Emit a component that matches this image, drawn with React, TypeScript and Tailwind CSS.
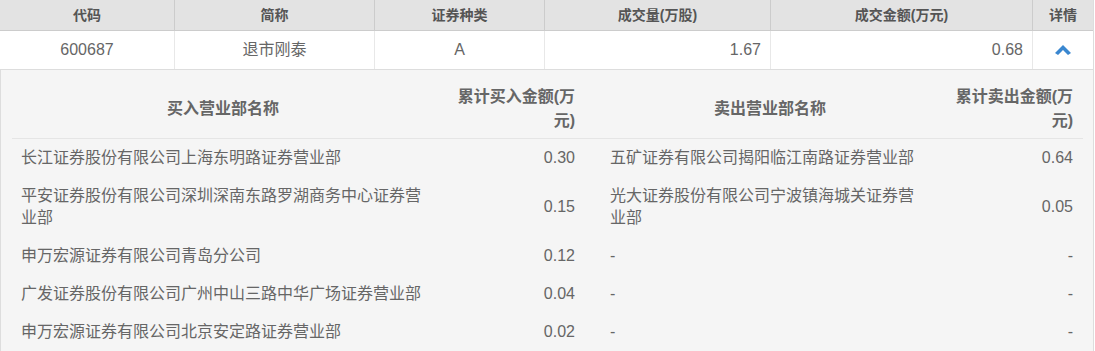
import { Fragment } from 'react'

interface Seat {
  buyName: string
  buyAmt: string
  sellName: string
  sellAmt: string
}

const seats: Seat[] = [
  { buyName: '长江证券股份有限公司上海东明路证券营业部', buyAmt: '0.30', sellName: '五矿证券有限公司揭阳临江南路证券营业部', sellAmt: '0.64' },
  { buyName: '平安证券股份有限公司深圳深南东路罗湖商务中心证券营业部', buyAmt: '0.15', sellName: '光大证券股份有限公司宁波镇海城关证券营业部', sellAmt: '0.05' },
  { buyName: '申万宏源证券有限公司青岛分公司', buyAmt: '0.12', sellName: '-', sellAmt: '-' },
  { buyName: '广发证券股份有限公司广州中山三路中华广场证券营业部', buyAmt: '0.04', sellName: '-', sellAmt: '-' },
  { buyName: '申万宏源证券有限公司北京安定路证券营业部', buyAmt: '0.02', sellName: '-', sellAmt: '-' },
]

const headers = ['代码', '简称', '证券种类', '成交量(万股)', '成交金额(万元)', '详情']

export default function App() {
  return (
    <div className="min-h-screen bg-white font-['Liberation_Sans','Noto_Sans_CJK_SC',sans-serif]">
      <div className="w-[1094px] border-r border-[#dddddd]">
        {/* Top table header */}
        <div className="grid grid-cols-[175px_200px_170px_226px_262px_60px] h-[31px] bg-[#e3e3e3] border-b border-[#cccccc] text-[14px] font-bold text-[#555555]">
          {headers.map((h, i) => (
            <div
              key={h}
              className={`flex items-center justify-center ${i < headers.length - 1 ? 'border-r border-[#cccccc]' : ''}`}
            >
              {h}
            </div>
          ))}
        </div>

        {/* Summary row */}
        <div className="grid grid-cols-[175px_200px_170px_226px_262px_60px] h-[39px] bg-white border-b border-[#dddddd] text-[16px] text-[#666666]">
          <div className="flex items-center justify-center border-r border-[#e8e8e8]">600687</div>
          <div className="flex items-center justify-center border-r border-[#e8e8e8]">退市刚泰</div>
          <div className="flex items-center justify-center border-r border-[#e8e8e8]">A</div>
          <div className="flex items-center justify-end pr-[9px] border-r border-[#e8e8e8]">1.67</div>
          <div className="flex items-center justify-end pr-[9px] border-r border-[#e8e8e8]">0.68</div>
          <div className="flex items-center justify-center">
            <svg width="16" height="10" viewBox="0 0 16 10" className="mt-[-1px]">
              <polygon points="8,0 16,8 13,10 8,5 3,10 0,8" fill="#3a87d0" />
            </svg>
          </div>
        </div>

        {/* Detail */}
        <div className="bg-[#f5f5f5] border-l border-[#dddddd] pl-[11px] pt-[10px] text-[16px] text-[#666666]">
          <div className="grid grid-cols-[422px_166px_340px_143px]">
            {/* header */}
            <div className="flex items-center justify-center py-[5px] leading-[24px] font-bold border-b border-[#e5e5e5]">
              买入营业部名称
            </div>
            <div className="flex items-center justify-end text-right pl-[10px] pr-[25px] py-[5px] leading-[24px] font-bold border-b border-[#e5e5e5]">
              累计买入金额(万元)
            </div>
            <div className="flex items-center justify-center py-[5px] leading-[24px] font-bold border-b border-[#e5e5e5]">
              卖出营业部名称
            </div>
            <div className="flex items-center justify-end text-right pl-[10px] pr-[10px] py-[5px] leading-[24px] font-bold border-b border-[#e5e5e5]">
              累计卖出金额(万元)
            </div>

            {seats.map((s, i) => (
              <Fragment key={i}>
                <div className="flex items-center pl-[9px] pr-[5px] py-[8px] leading-[22px]">{s.buyName}</div>
                <div className="flex items-center justify-end pr-[25px] py-[8px] leading-[22px]">{s.buyAmt}</div>
                <div className="flex items-center pl-[10px] pr-[12px] py-[8px] leading-[22px]">{s.sellName}</div>
                <div className="flex items-center justify-end pr-[10px] py-[8px] leading-[22px]">{s.sellAmt}</div>
              </Fragment>
            ))}
          </div>
        </div>
      </div>
    </div>
  )
}
